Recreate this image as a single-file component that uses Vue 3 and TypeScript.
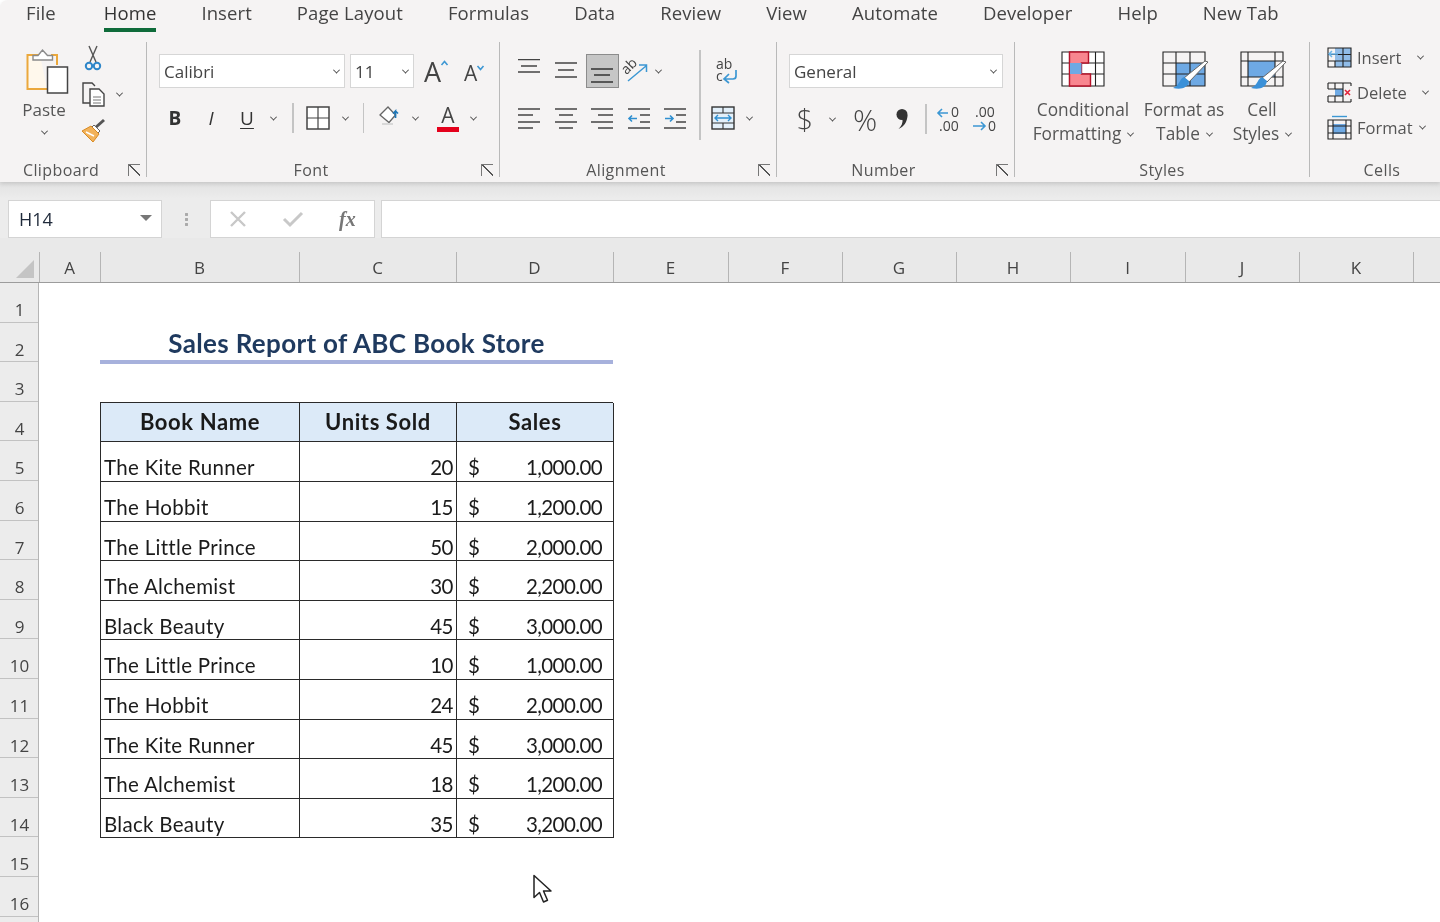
<template>
  <div class="app">
    <header class="ribbon">
      <nav class="tabs">
        <span v-for="t in tabs" :key="t" class="tab" :class="{ active: t === 'Home' }">{{ t }}</span>
      </nav>

      <div class="groups">
        <!-- Clipboard -->
        <section class="group g-clipboard">
          <div class="body clip-body">
            <div class="paste">
              <svg class="paste-icon" width="42" height="47" viewBox="0 0 42 47">
                <path d="M14 8H1.500v34H21" fill="#fff8ec" stroke="#eba83c" stroke-width="2" />
                <path d="M25 8h6v10" fill="none" stroke="#eba83c" stroke-width="2" />
                <path d="M7 13V8.500h5L16.500 3l5 5.500h5V13z" fill="#fff" stroke="#8a8a8a" stroke-width="1.400" />
                <rect x="21.500" y="20" width="20" height="26" fill="#fff" stroke="#444" stroke-width="1.500" />
              </svg>
              <span class="paste-label">Paste</span>
              <i class="chev" />
            </div>
            <div class="clip-tools">
              <svg class="scissors" width="18" height="26" viewBox="0 0 18 26">
                <path d="M5 1l7 16M13 1L6 17" stroke="#555" stroke-width="1.400" fill="none" />
                <circle cx="5" cy="21" r="3.200" fill="none" stroke="#2e86c9" stroke-width="2" />
                <circle cx="13" cy="21" r="3.200" fill="none" stroke="#2e86c9" stroke-width="2" />
              </svg>
              <div class="copy-row">
                <svg width="26" height="26" viewBox="0 0 26 26">
                  <path d="M9 22H2V2h9l3 3" fill="none" stroke="#444" stroke-width="1.400" />
                  <path d="M9 8h9l5 5v12H9z" fill="#fff" stroke="#444" stroke-width="1.400" />
                  <path d="M12 16h8M12 19h8M12 22h8" stroke="#777" />
                </svg>
                <i class="chev" />
              </div>
              <svg width="25" height="24" viewBox="0 0 25 24">
                <path d="M14 9l9-8" stroke="#555" stroke-width="3" />
                <path d="M13 6l6 6-2 2-6-6z" fill="#fff" stroke="#666" />
                <path d="M1 12l9-5 8 8-6 8z" fill="#f2b25a" stroke="#d98a22" />
                <path d="M5 13l8 4" stroke="#fff" stroke-width="1.500" />
              </svg>
            </div>
          </div>
          <div class="label">Clipboard</div>
          <i class="launcher" />
        </section>

        <!-- Font -->
        <section class="group g-font">
          <div class="body">
            <div class="row">
              <div class="combo font-name">Calibri<i class="chev" /></div>
              <div class="combo font-size">11<i class="chev" /></div>
              <span class="grow big">A<svg width="7" height="6" viewBox="0 0 7 6"><path d="M.5 5l3-3.500 3 3.500" fill="none" stroke="#3d97d3" stroke-width="1.600" /></svg></span>
              <span class="grow small">A<svg width="7" height="6" viewBox="0 0 7 6"><path d="M.5 1l3 3.500 3-3.500" fill="none" stroke="#3d97d3" stroke-width="1.600" /></svg></span>
            </div>
            <div class="row row2 font-row">
              <span class="fbtn bold">B</span>
              <span class="fbtn italic">I</span>
              <span class="fbtn under">U</span>
              <i class="chev c-u" />
              <i class="vsep s1" />
              <svg class="borders" width="24" height="24" viewBox="0 0 24 24">
                <rect x="1" y="1" width="22" height="22" fill="#fff" stroke="#444" stroke-width="1.500" />
                <path d="M12 1v22M1 12h22" stroke="#444" stroke-width="1.200" />
              </svg>
              <i class="chev c-b" />
              <i class="vsep s2" />
              <svg class="fill" width="20" height="20" viewBox="0 0 20 20">
                <path d="M1 10l8-8 7.500 8-6.500 7.500z" fill="#fff" stroke="#666" stroke-width="1.300" />
                <path d="M16.500 13V6l-2.500 2.500M16.500 6L19 8.500" fill="none" stroke="#1f78b8" stroke-width="1.700" />
                <path d="M3 19h11" stroke="#d8d8d8" stroke-width="2" />
              </svg>
              <i class="chev c-f" />
              <span class="fcolor">A</span>
              <i class="chev c-c" />
            </div>
          </div>
          <div class="label">Font</div>
          <i class="launcher" />
        </section>

        <!-- Alignment -->
        <section class="group g-align">
          <div class="body align-body">
            <div class="align-grid">
              <span class="acell">
                <svg width="22" height="24" viewBox="0 0 22 24"><path d="M0 .7h22M3 7h16M0 13h22" stroke="#444" stroke-width="1.300" /></svg>
              </span>
              <span class="acell">
                <svg width="22" height="24" viewBox="0 0 22 24"><path d="M0 4h22M3 11h16M0 18h22" stroke="#444" stroke-width="1.300" /></svg>
              </span>
              <span class="acell on">
                <svg width="22" height="24" viewBox="0 0 22 24"><path d="M0 10h22M3 16h16M0 23h22" stroke="#333" stroke-width="1.500" /></svg>
              </span>
              <span class="acell orient">
                <svg width="25" height="26" viewBox="0 0 25 26">
                  <text x="0" y="13" transform="rotate(-45 7 11)" class="svg-txt" font-size="14">ab</text>
                  <path d="M5 23L23 8M16 7h7.500v7" fill="none" stroke="#3c97d3" stroke-width="1.500" />
                </svg>
                <i class="chev" />
              </span>
              <span class="acell"><svg width="22" height="24" viewBox="0 0 22 24"><path d="M0 2h22M0 8h15M0 15h22M0 21h15" stroke="#444" stroke-width="1.300" /></svg></span>
              <span class="acell"><svg width="22" height="24" viewBox="0 0 22 24"><path d="M0 2h22M4 8h14M0 15h22M4 21h14" stroke="#444" stroke-width="1.300" /></svg></span>
              <span class="acell"><svg width="22" height="24" viewBox="0 0 22 24"><path d="M0 2h22M7 8h15M0 15h22M7 21h15" stroke="#444" stroke-width="1.300" /></svg></span>
              <span class="acell">
                <svg width="22" height="24" viewBox="0 0 22 24">
                  <path d="M0 2h22M12 8h10M12 15h10M0 21h22" stroke="#444" stroke-width="1.300" />
                  <path d="M9 11.500H1M4 8.500l-3 3 3 3" fill="none" stroke="#2f8fd0" stroke-width="1.600" />
                </svg>
              </span>
              <span class="acell">
                <svg width="22" height="24" viewBox="0 0 22 24">
                  <path d="M0 2h22M12 8h10M12 15h10M0 21h22" stroke="#444" stroke-width="1.300" />
                  <path d="M1 11.500h8M6 8.500l3 3-3 3" fill="none" stroke="#2f8fd0" stroke-width="1.600" />
                </svg>
              </span>
            </div>
            <i class="vsep tall" />
            <div class="align-right">
              <svg width="24" height="28" viewBox="0 0 24 28">
                <text x="1" y="12" class="svg-txt" font-size="14">ab</text>
                <text x="1" y="24" class="svg-txt" font-size="14">c</text>
                <path d="M21 13v6a3 3 0 0 1-3 3H10M14 17l-5 5 5 4" fill="none" stroke="#3c97d3" stroke-width="1.700" />
              </svg>
              <div class="merge-row">
                <svg width="24" height="24" viewBox="0 0 24 24">
                  <rect x="1" y="1" width="22" height="22" fill="#e3f0fa" stroke="#333" stroke-width="1.400" />
                  <path d="M1 7h22M1 17h22M12 1v6M12 17v6" stroke="#333" stroke-width="1.100" />
                  <path d="M4 12h16M7 9l-3 3 3 3M17 9l3 3-3 3" fill="none" stroke="#2f8fd0" stroke-width="1.400" />
                </svg>
                <i class="chev" />
              </div>
            </div>
          </div>
          <div class="label">Alignment</div>
          <i class="launcher" />
        </section>

        <!-- Number -->
        <section class="group g-number">
          <div class="body">
            <div class="row">
              <div class="combo general">General<i class="chev" /></div>
            </div>
            <div class="row row2 num-row">
              <span class="dollar">$</span>
              <i class="chev c-d" />
              <span class="pct">%</span>
              <svg class="comma" width="14" height="22" viewBox="0 0 14 22">
                <circle cx="7" cy="6.500" r="5.500" fill="#333" />
                <path d="M12.500 7c0 7-4 12-9 14 3-3 4.500-6 4-10z" fill="#333" />
              </svg>
              <i class="vsep s3" />
              <svg class="dec" width="25" height="28" viewBox="0 0 25 28">
                <text x="15" y="12" class="svg-txt" font-size="14">0</text>
                <text x="3" y="26" class="svg-txt" font-size="14">.00</text>
                <path d="M12 8H2M6 4L2 8l4 4" fill="none" stroke="#3c97d3" stroke-width="1.600" />
              </svg>
              <svg class="inc" width="25" height="28" viewBox="0 0 25 28">
                <text x="3" y="12" class="svg-txt" font-size="14">.00</text>
                <text x="16" y="26" class="svg-txt" font-size="14">0</text>
                <path d="M1 21h12M9 17l4 4-4 4" fill="none" stroke="#3c97d3" stroke-width="1.600" />
              </svg>
            </div>
          </div>
          <div class="label">Number</div>
          <i class="launcher" />
        </section>

        <!-- Styles -->
        <section class="group g-styles">
          <div class="body styles-body">
            <div class="style-item">
              <svg width="44" height="42" viewBox="0 0 44 42">
                <path d="M1 1h42v34H1zM8.500 1v34M34.500 1v34M1 12h42M1 23h42" fill="#fff" stroke="#222" stroke-width="1.100" />
                <path d="M8.500 1h19v11h-7v11h9v12h-21z" fill="#f8868f" stroke="#b5122a" stroke-width="1.400" />
                <rect x="9" y="12" width="11.500" height="11" fill="#6ea9e4" />
              </svg>
              <span class="style-l1">Conditional</span>
              <span class="style-l2">Formatting<i class="chev" /></span>
            </div>
            <div class="style-item shifted">
              <svg width="48" height="42" viewBox="0 0 48 42">
                <path d="M14 12h29v23H14z" fill="#6ea9e4" />
                <path d="M1 1h42v34H1zM14 1v34M28 1v34M1 12h42M1 23h42" fill="none" stroke="#222" stroke-width="1.100" />
                <path d="M46 11L27 31l-5-4L43 10z" fill="#fff" stroke="#666" />
                <path d="M22 26c-5 2-3 7-11 11 8 2 15 0 16-7z" fill="#3a90d8" />
              </svg>
              <span class="style-l1">Format as</span>
              <span class="style-l2">Table<i class="chev" /></span>
            </div>
            <div class="style-item shifted">
              <svg width="48" height="42" viewBox="0 0 48 42">
                <path d="M8 10h27v16H8z" fill="#6ea9e4" />
                <path d="M1 1h42v34H1zM8 1v34M35 1v34M1 10h42M1 26h42" fill="none" stroke="#222" stroke-width="1.100" />
                <path d="M46 11L27 31l-5-4L43 10z" fill="#fff" stroke="#666" />
                <path d="M22 26c-5 2-3 7-11 11 8 2 15 0 16-7z" fill="#3a90d8" />
              </svg>
              <span class="style-l1">Cell</span>
              <span class="style-l2">Styles<i class="chev" /></span>
            </div>
          </div>
          <div class="label">Styles</div>
        </section>

        <!-- Cells -->
        <section class="group g-cells">
          <div class="body cells-body">
            <div class="cell-item">
              <svg width="25" height="21" viewBox="0 0 25 21">
                <path d="M8 1h16v19H8z" fill="#6ea9e4" opacity=".75" />
                <path d="M8 1h16v19H1V1zM1 7.500h23M1 14h23M8 14v6M16 1v19" fill="none" stroke="#222" stroke-width="1.100" />
                <path d="M11 7H2M5 4L2 7l3 3" fill="none" stroke="#6ab4e8" stroke-width="1.500" />
              </svg>
              <span>Insert</span><i class="chev c-in" />
            </div>
            <div class="cell-item">
              <svg width="25" height="21" viewBox="0 0 25 21">
                <path d="M8 7h8v7H8z" fill="#6ea9e4" />
                <path d="M1 1h23M1 20h23M1 1v6M8 1v6M16 1v6M24 1v3M1 14v6M8 14v6M16 14v6M24 17v3M1 7h15v7H1" fill="none" stroke="#222" stroke-width="1.100" />
                <path d="M18 8l5 5M23 8l-5 5" stroke="#e2233b" stroke-width="1.600" />
              </svg>
              <span>Delete</span><i class="chev c-de" />
            </div>
            <div class="cell-item">
              <svg width="25" height="25" viewBox="0 0 25 25">
                <path d="M6 9h13v10H6z" fill="#6ea9e4" />
                <path d="M1 5h23v19H1zM1 11h23M1 18h23M6 5v19M19 5v19" fill="none" stroke="#222" stroke-width="1.100" />
                <path d="M5 1.500h15" stroke="#3c97d3" stroke-width="1.400" />
              </svg>
              <span>Format</span><i class="chev c-fo" />
            </div>
          </div>
          <div class="label">Cells</div>
        </section>
      </div>
    </header>

    <div class="formula-band">
      <div class="namebox">H14<i class="caret" /></div>
      <i class="dots" />
      <div class="fx-box">
        <svg width="18" height="18" viewBox="0 0 18 18"><path d="M2 2l14 14M16 2L2 16" stroke="#c8c8c8" stroke-width="2.400" /></svg>
        <svg width="20" height="16" viewBox="0 0 20 16"><path d="M1 8l6 6L19 2" fill="none" stroke="#c8c8c8" stroke-width="3" /></svg>
        <span class="fx">fx</span>
      </div>
      <div class="formula-input" />
    </div>

    <div class="col-heads">
      <div class="corner"><i class="tri" /></div>
      <div v-for="c in cols" :key="c.name" class="col-head" :style="{ width: c.w + 'px' }">{{ c.name }}</div>
    </div>

    <main class="sheet">
      <div class="row-heads">
        <div v-for="n in 16" :key="n" class="row-head">{{ n }}</div>
      </div>
      <div class="canvas">
        <div class="title">Sales Report of ABC Book Store</div>
        <div class="spacer" />
        <div class="report">
          <div class="th">Book Name</div>
          <div class="th">Units Sold</div>
          <div class="th">Sales</div>
          <template v-for="r in rows" :key="r.name + r.units">
            <div class="td">{{ r.name }}</div>
            <div class="td num">{{ r.units }}</div>
            <div class="td money"><span>$</span><span class="amount">{{ r.sales }}</span></div>
          </template>
        </div>
      </div>
      <svg class="cursor" width="22" height="30" viewBox="0 0 22 30">
        <path d="M2 1.500v22l5.500-5 4 9.500 4-1.700-4-9.300h7.500z" fill="#fff" stroke="#222" stroke-width="1.500" stroke-linejoin="round" />
      </svg>
    </main>
  </div>
</template>

<script setup lang="ts">
const tabs: string[] = [
  'File', 'Home', 'Insert', 'Page Layout', 'Formulas', 'Data', 'Review',
  'View', 'Automate', 'Developer', 'Help', 'New Tab'
];

const cols = [
  { name: 'A', w: 61 }, { name: 'B', w: 199 }, { name: 'C', w: 157 }, { name: 'D', w: 157 },
  { name: 'E', w: 115 }, { name: 'F', w: 114 }, { name: 'G', w: 114 }, { name: 'H', w: 114 },
  { name: 'I', w: 115 }, { name: 'J', w: 114 }, { name: 'K', w: 114 }
];

const rows = [
  { name: 'The Kite Runner', units: 20, sales: '1,000.00' },
  { name: 'The Hobbit', units: 15, sales: '1,200.00' },
  { name: 'The Little Prince', units: 50, sales: '2,000.00' },
  { name: 'The Alchemist', units: 30, sales: '2,200.00' },
  { name: 'Black Beauty', units: 45, sales: '3,000.00' },
  { name: 'The Little Prince', units: 10, sales: '1,000.00' },
  { name: 'The Hobbit', units: 24, sales: '2,000.00' },
  { name: 'The Kite Runner', units: 45, sales: '3,000.00' },
  { name: 'The Alchemist', units: 18, sales: '1,200.00' },
  { name: 'Black Beauty', units: 35, sales: '3,200.00' }
];
</script>

<style scoped>
.app {
  width: 1440px;
  height: 922px;
  overflow: hidden;
  position: relative;
  background: #fff;
  display: flex;
  flex-direction: column;
  font-family: "Open Sans", sans-serif;
  color: #444;
  filter: blur(.4px);
}

/* ribbon */
.ribbon {
  height: 182px;
  flex: none;
  background: #f5f3f3;
  border-top-left-radius: 8px;
  box-shadow: 0 2px 4px #0000001f;
  position: relative;
  z-index: 1;
}
.tabs {
  height: 36px;
  display: flex;
  gap: 45px;
  padding-left: 26px;
  font-size: 18.500px;
  line-height: 26px;
  letter-spacing: .1px;
}
.tab { height: 32px; box-sizing: border-box; white-space: nowrap; }
.tab:first-child { margin-right: 3px; }
.tab.active { border-bottom: 4px solid #0f6b3a; color: #333; }
.groups {
  display: flex;
  margin-top: 6px;
  height: 135px;
}
.group {
  position: relative;
  flex: none;
  box-sizing: border-box;
  border-right: 1.500px solid #b9b9b9;
  display: flex;
  flex-direction: column;
  justify-content: space-between;
}
.g-clipboard { width: 147px; }
.g-font { width: 353px; }
.g-align { width: 277px; }
.g-number { width: 238px; }
.g-styles { width: 295px; }
.g-cells { flex: 1; border-right: 0; }
.body { padding-top: 12px; }
.label {
  height: 20px;
  line-height: 20px;
  margin-bottom: -3px;
  text-align: center;
  font-size: 16px;
  letter-spacing: .4px;
  padding-right: 24px;
  color: #555;
}
.g-styles .label { padding-right: 0; }
.g-cells .label { padding: 0 0 0 14px; }
.launcher {
  position: absolute;
  right: 6px;
  bottom: 1px;
  width: 11px;
  height: 11px;
  border-left: 1.500px solid #777;
  border-top: 1.500px solid #777;
  background: linear-gradient(45deg, transparent 46%, #555 46% 58%, transparent 58%);
}
.chev {
  display: inline-block;
  width: 4px;
  height: 4px;
  border-right: 1.800px solid #4a4a4a;
  border-bottom: 1.800px solid #4a4a4a;
  transform: rotate(45deg) translate(-1px, -1px);
  flex: none;
}
.vsep { display: block; width: 1.500px; background: #c4c4c4; flex: none; }
.row { display: flex; align-items: center; }
.row2 { margin-top: 14px; height: 34px; }
.combo {
  height: 34px;
  box-sizing: border-box;
  background: #fff;
  border: 1.500px solid #d6d6d6;
  font-size: 17px;
  line-height: 31px;
  padding-left: 4px;
  display: flex;
  align-items: center;
  justify-content: space-between;
  padding-right: 5px;
}
.svg-txt { font-family: "Open Sans", sans-serif; fill: #444; }
svg { overflow: visible; flex: none; }

/* clipboard */
.clip-body { display: flex; padding-top: 5px; }
.paste {
  margin-left: 21px;
  width: 46px;
  display: flex;
  flex-direction: column;
  align-items: center;
}
.paste-icon { margin-left: 6px; }
.paste-label { font-size: 17px; line-height: 24px; margin-top: 4px; color: #555; }
.paste .chev { margin-top: 8px; }
.clip-tools {
  margin: -2px 0 0 14px;
  width: 50px;
  display: flex;
  flex-direction: column;
}
.scissors { margin-left: 3px; }
.copy-row { display: flex; align-items: center; gap: 10px; margin-top: 10px; }
.clip-tools > svg:last-child { margin-top: 12px; }

/* font */
.g-font .body { padding-left: 12px; }
.font-name { width: 186px; }
.font-size { width: 64px; margin-left: 5px; }
.grow { display: flex; align-items: flex-start; font-weight: 400; line-height: 1; color: #444; }
.grow.big { font-size: 27px; margin-left: 10px; }
.grow.small { font-size: 21px; margin-left: 16px; margin-top: 4px; }
.grow svg { margin-top: 2px; }
.font-row { margin-top: 13px; }
.fbtn { width: 36px; text-align: center; font-size: 19px; color: #333; }
.font-row .fbtn:first-child { margin-left: -2px; }
.bold { font-weight: 700; }
.italic { font-style: italic; }
.under { text-decoration: underline; text-underline-offset: 3px; }
.c-u { margin-left: 6px; }
.s1 { height: 30px; margin-left: 16px; }
.borders { margin-left: 12px; }
.c-b { margin-left: 13px; }
.s2 { height: 30px; margin-left: 15px; }
.fill { margin-left: 15px; margin-top: -6px; }
.c-f { margin-left: 14px; }
.fcolor {
  margin-left: 19px;
  width: 22px;
  text-align: center;
  font-size: 21px;
  line-height: 20px;
  height: 22px;
  border-bottom: 5px solid #e4001b;
  color: #444;
}
.c-c { margin-left: 12px; }

/* alignment */
.align-body { display: flex; }
.align-grid {
  width: 187px;
  margin-left: 11px;
  display: grid;
  grid-template-columns: repeat(5, 36.500px);
  grid-auto-rows: 34px;
  row-gap: 14px;
  flex: none;
}
.acell { display: flex; align-items: center; justify-content: center; }
.acell.on {
  width: 33px;
  height: 34px;
  box-sizing: border-box;
  background: #c6c6c6;
  border: 1.500px solid #8c8c8c;
  justify-self: center;
}
.orient { grid-column: span 2; justify-content: flex-start; padding-left: 2px; gap: 8px; }
.vsep.tall { height: 90px; margin: -4px 0 0 1px; }
.align-right {
  width: 62px;
  padding-left: 10px;
  box-sizing: border-box;
  display: flex;
  flex-direction: column;
}
.align-right > svg { margin: 3px 0 0 4px; }
.merge-row { display: flex; align-items: center; gap: 12px; margin-top: 21px; }

/* number */
.g-number .body { padding-left: 12px; }
.general { width: 214px; padding-right: 6px; }
.num-row { position: relative; }
.dollar { font-size: 28.500px; width: 32px; text-align: center; font-weight: 300; }
.c-d { margin-left: 9px; }
.pct { font-size: 30px; margin-left: 15px; width: 30px; text-align: center; font-weight: 300; }
.comma { margin-left: 15px; }
.s3 { height: 30px; margin-left: 16px; }
.dec { margin-left: 9px; }
.inc { margin-left: 11px; }

/* styles */
.styles-body {
  display: grid;
  grid-template-columns: 130px 72px 84px;
  padding: 10px 0 0 3px;
}
.style-item {
  height: 90px;
  display: flex;
  flex-direction: column;
  align-items: center;
  font-size: 17.300px;
  line-height: 24px;
  color: #555;
}
.style-item svg { margin-bottom: 5px; margin-top: -1px; }
.style-item.shifted svg { margin-left: 4px; }
.style-l2 { display: flex; align-items: center; gap: 7px; white-space: nowrap; }
.style-l1 { white-space: nowrap; }

/* cells */
.cells-body {
  padding: 3px 0 0 17px;
  display: flex;
  flex-direction: column;
  gap: 10px;
}
.cell-item {
  display: flex;
  align-items: center;
  height: 25px;
  font-size: 16.500px;
  color: #555;
}
.cell-item span { margin-left: 5px; }
.c-in { margin-left: 17px; }
.c-de { margin-left: 16px; }
.c-fo { margin-left: 7px; }

/* formula bar */
.formula-band {
  height: 56px;
  flex: none;
  box-sizing: border-box;
  background: linear-gradient(#e2e2e2, #ececec 30%);
  display: flex;
  padding: 18px 0 0 8px;
}
.namebox {
  width: 154px;
  height: 38px;
  box-sizing: border-box;
  background: #fff;
  border: 1px solid #d4d4d4;
  font-size: 18px;
  line-height: 36px;
  padding-left: 10px;
  color: #1f2a3a;
  position: relative;
}
.caret {
  position: absolute;
  right: 9px;
  top: 14px;
  border: 6px solid transparent;
  border-top: 6px solid #777;
  border-bottom: 0;
}
.dots {
  width: 3px;
  height: 14px;
  margin: 12px 22px 0 23px;
  background: radial-gradient(circle, #aaa 1.400px, transparent 1.600px) 0 0 / 3px 5px;
}
.fx-box {
  width: 165px;
  height: 38px;
  box-sizing: border-box;
  background: #fff;
  border: 1px solid #d4d4d4;
  display: flex;
  align-items: center;
  padding-left: 18px;
  gap: 36px;
}
.fx {
  font-family: "Liberation Serif", serif;
  font-style: italic;
  font-weight: 700;
  font-size: 20px;
  color: #777;
}
.formula-input {
  flex: 1;
  height: 38px;
  margin-left: 6px;
  box-sizing: border-box;
  background: #fff;
  border: 1px solid #d4d4d4;
  border-right: 0;
}

/* column and row heads */
.col-heads {
  height: 45px;
  flex: none;
  box-sizing: border-box;
  background: #e9e9e9;
  border-bottom: 1.500px solid #9c9c9c;
  display: flex;
  align-items: flex-end;
}
.corner {
  width: 39.500px;
  height: 30px;
  flex: none;
  box-sizing: border-box;
  border-right: 1.500px solid #b5b5b5;
  position: relative;
}
.tri {
  position: absolute;
  right: 5px;
  bottom: 4px;
  border-left: 18px solid transparent;
  border-bottom: 18px solid #c4c4c4;
}
.col-head {
  flex: none;
  height: 30px;
  box-sizing: border-box;
  border-right: 1.500px solid #b5b5b5;
  text-align: center;
  font-size: 17px;
  line-height: 32px;
  color: #444;
}
.sheet { flex: 1; display: flex; position: relative; min-height: 0; }
.row-heads {
  width: 39px;
  flex: none;
  box-sizing: border-box;
  background: #ececec;
  border-right: 1.500px solid #b5b5b5;
}
.row-head {
  height: 39.600px;
  box-sizing: border-box;
  border-bottom: 1.500px solid #c2c2c2;
  text-align: center;
  font-size: 17px;
  line-height: 53px;
  color: #444;
  padding-left: 1px;
}

/* worksheet content */
.canvas { padding: 39.600px 0 0 61px; font-family: Lato, sans-serif; color: #1b1b1b; }
.title {
  width: 513px;
  height: 41.600px;
  box-sizing: border-box;
  border-bottom: 4px solid #a7b1dc;
  text-align: center;
  font-size: 26px;
  letter-spacing: .33px;
  font-weight: 700;
  line-height: 40px;
  color: #1f3a5f;
  white-space: nowrap;
}
.spacer { height: 37.600px; }
.report {
  width: 513px;
  display: grid;
  grid-template-columns: 199px 157px 157px;
  grid-auto-rows: 39.600px;
  box-sizing: border-box;
  border-top: 1.500px solid #2a2a2a;
  border-left: 1.500px solid #2a2a2a;
}
.th, .td {
  box-sizing: border-box;
  border-right: 1.500px solid #2a2a2a;
  border-bottom: 1.500px solid #2a2a2a;
  white-space: nowrap;
}
.th {
  background: #dceaf8;
  text-align: center;
  font-weight: 700;
  font-size: 22px;
  letter-spacing: .6px;
  line-height: 38px;
  color: #1a1a1a;
}
.td {
  font-size: 20.500px;
  line-height: 24px;
  padding: 13px 3px 0;
  letter-spacing: .3px;
}
.num { text-align: right; letter-spacing: -.5px; }
.money {
  display: flex;
  justify-content: space-between;
  padding: 13px 11px 0 11px;
}
.amount { letter-spacing: -.6px; }
.cursor { position: absolute; left: 532px; top: 591px; }
</style>

<style>
html, body { margin: 0; overflow: hidden; background: #fff; }
</style>
